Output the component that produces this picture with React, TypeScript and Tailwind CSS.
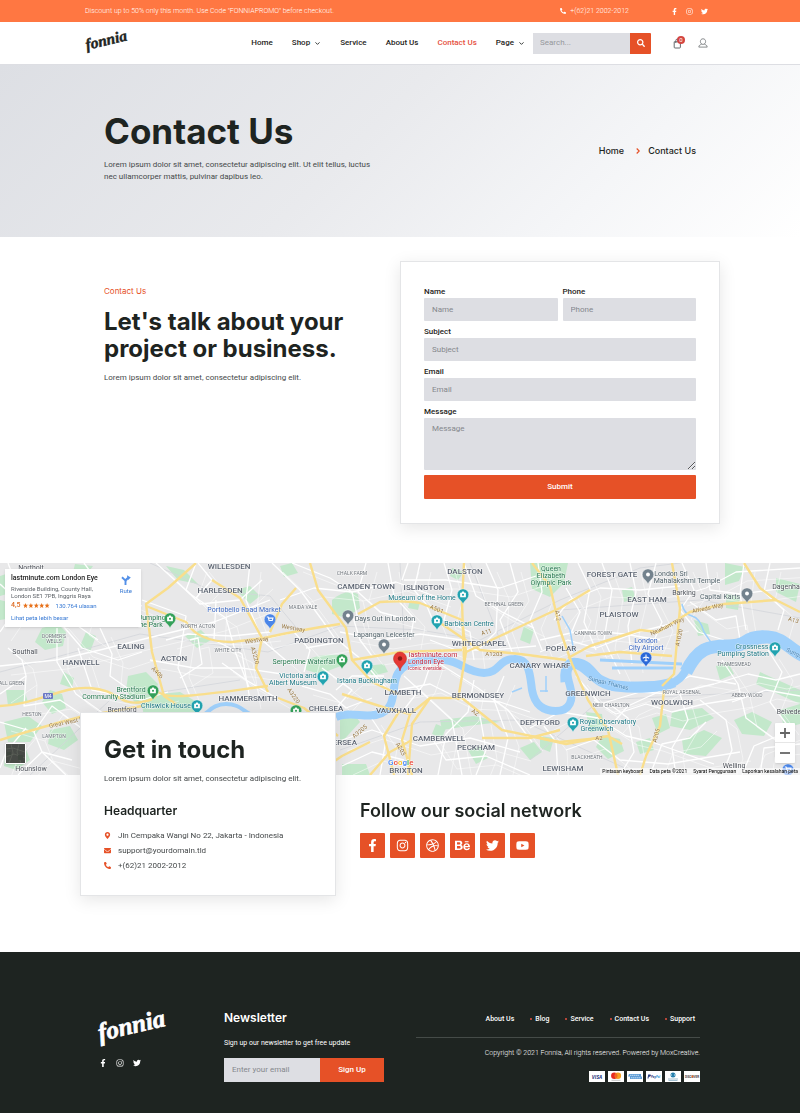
import type { ReactNode } from "react";
import {
  FaBehance,
  FaDribbble,
  FaEnvelope,
  FaFacebookF,
  FaInstagram,
  FaMapMarkerAlt,
  FaPhoneAlt,
  FaSearch,
  FaTwitter,
  FaYoutube,
} from "react-icons/fa";
import { FiChevronDown } from "react-icons/fi";

const field =
  "block w-full rounded-[1px] bg-[#dddee3] px-2 text-[8px] text-[#1e2421] placeholder:text-[#85888d] outline-none focus:ring-1 focus:ring-[#e65127]";

function Logo({ className }: { className: string }) {
  return (
    <svg viewBox="0 0 72 42" className={className} role="img" aria-label="fonnia">
      <text
        x="4"
        y="32"
        transform="rotate(-13 4 32)"
        fill="currentColor"
        stroke="currentColor"
        strokeWidth="0.7"
        strokeLinejoin="round"
        className="font-['Liberation_Serif',serif] text-[25px] font-bold italic"
      >
        fonnia
      </text>
    </svg>
  );
}

function SocialIcons({ className }: { className: string }) {
  return (
    <div className={className}>
      <a href="#facebook" aria-label="Facebook"><FaFacebookF /></a>
      <a href="#instagram" aria-label="Instagram"><FaInstagram /></a>
      <a href="#twitter" aria-label="Twitter"><FaTwitter /></a>
    </div>
  );
}

function TopBar() {
  return (
    <div className="bg-[#ff7742] text-[7px] font-light leading-[22px] text-white">
      <div className="mx-auto flex max-w-[640px] items-center pl-[5px] pr-3">
        <p className="mr-auto">Discount up to 50% only this month. Use Code "FONNIAPROMO" before checkout.</p>
        <p className="flex items-center gap-1">
          <FaPhoneAlt className="size-[6px]" /> +(62)21 2002-2012
        </p>
        <SocialIcons className="ml-[42px] flex items-center gap-2 text-[7px]" />
      </div>
    </div>
  );
}

function Header() {
  return (
    <header className="border-b border-[#dddee3] bg-white">
      <div className="mx-auto flex h-[42px] max-w-[640px] items-center pl-1 pr-3">
        <a href="#home" className="mr-auto text-[#1e2421]"><Logo className="h-[26px] w-[45px]" /></a>
        <nav className="flex items-center gap-[19px] text-[8px] font-medium text-[#1e2421]">
          <a href="#home">Home</a>
          <a href="#shop" className="flex items-center gap-1">Shop <FiChevronDown className="size-[7px]" strokeWidth={3} /></a>
          <a href="#service">Service</a>
          <a href="#about">About Us</a>
          <a href="#contact" className="text-[#e65141]">Contact Us</a>
          <a href="#page" className="flex items-center gap-1">Page <FiChevronDown className="size-[7px]" strokeWidth={3} /></a>
        </nav>
        <form className="ml-2 flex h-[21px]" onSubmit={(e) => e.preventDefault()}>
          <input
            aria-label="Search"
            type="search"
            placeholder="Search..."
            className="w-[97px] bg-[#dddee3] px-[7px] text-[8px] outline-none placeholder:text-[#96989c]"
          />
          <button aria-label="Search" className="grid w-[21px] place-items-center rounded-r-[1px] bg-[#e65127] text-white">
            <FaSearch className="size-[8px]" />
          </button>
        </form>
        <button aria-label="Cart" className="relative ml-[22px] text-[#55595c]">
          <svg viewBox="0 0 9 11" className="h-[11px] w-[9px]" fill="none" stroke="currentColor" strokeWidth="0.9">
            <path d="M1.2 3.8h6.2v5.4a.8.8 0 0 1-.8.8H2a.8.8 0 0 1-.8-.8zM2.8 5V2.6a1.5 1.5 0 0 1 3 0V5" />
          </svg>
          <span className="absolute -right-[3px] -top-[2px] grid size-[8px] place-items-center rounded-full bg-[#d44540] text-[6px] leading-none text-white">0</span>
        </button>
        <a href="#account" aria-label="Account" className="ml-4 text-[#66696c]">
          <svg viewBox="0 0 10 10" className="size-[10px]" fill="none" stroke="currentColor" strokeWidth="0.75">
            <path d="M5 .8c1.7 0 2.6 1.2 2.6 2.7C7.6 5.300 6.400 6.400 5 6.400S2.400 5.300 2.400 3.500C2.400 2 3.300.8 5 .8zM3.600 6.200C2.600 6.700.9 7 .8 9.100h8.400C9.100 7 7.400 6.700 6.400 6.200" />
          </svg>
        </a>
      </div>
    </header>
  );
}

function Hero() {
  return (
    <section className="bg-[linear-gradient(135deg,#dddfe4_0%,#e9eaed_45%,#f5f6f8_75%,#ffffff_100%)]">
      <div className="mx-auto flex h-[172px] max-w-[640px] items-center justify-between px-6">
        <div className="max-w-[272px] pb-3">
          <h1 className="text-[35px] font-bold leading-[48px] text-[#1e2421] font-[Inter,sans-serif]">Contact Us</h1>
          <p className="mt-1 text-[8px] leading-3 text-[#45494a]">
            Lorem ipsum dolor sit amet, consectetur adipiscing elit. Ut elit tellus, luctus nec ullamcorper mattis, pulvinar dapibus leo.
          </p>
        </div>
        <nav aria-label="Breadcrumb" className="flex items-center text-[9px] font-medium text-[#1e2421] font-[Inter,sans-serif]">
          <a href="#home">Home</a>
          <svg viewBox="0 0 4 6" className="ml-3 mr-2 h-[6px] w-[4px]" fill="none" stroke="#e65127" strokeWidth="1.2">
            <path d="M.7.5 3.200 3 .7 5.500" />
          </svg>
          <span>Contact Us</span>
        </nav>
      </div>
    </section>
  );
}

function Labelled({ id, label, children }: { id: string; label: string; children: ReactNode }) {
  return (
    <div className="flex-1">
      <label htmlFor={id} className="block text-[8px] font-medium leading-3 text-[#1e2421]">{label}</label>
      {children}
    </div>
  );
}

function ContactSection() {
  return (
    <section className="mx-auto flex max-w-[640px] items-start gap-6 py-6">
      <div className="flex-1 pl-6 pt-6">
        <p className="text-[8px] leading-3 text-[#e65127] font-[Inter,sans-serif]">Contact Us</p>
        <h2 className="mt-[11px] max-w-[260px] text-[24px] font-bold leading-[27px] text-[#1e2421] font-[Inter,sans-serif]">
          Let's talk about your project or business.
        </h2>
        <p className="mt-[10px] text-[8px] leading-3 text-[#45494a]">Lorem ipsum dolor sit amet, consectetur adipiscing elit.</p>
      </div>
      <form
        onSubmit={(e) => e.preventDefault()}
        className="mb-[15px] flex w-1/2 flex-col gap-[5px] border border-[#e4e5e7] bg-white px-[23px] py-6 shadow-[0_4px_16px_rgba(0,0,0,0.10)]"
      >
        <div className="flex gap-[5px]">
          <Labelled id="name" label="Name"><input id="name" placeholder="Name" className={`${field} h-[23px]`} /></Labelled>
          <Labelled id="phone" label="Phone"><input id="phone" type="tel" placeholder="Phone" className={`${field} h-[23px]`} /></Labelled>
        </div>
        <Labelled id="subject" label="Subject"><input id="subject" placeholder="Subject" className={`${field} h-[23px]`} /></Labelled>
        <Labelled id="email" label="Email"><input id="email" type="email" placeholder="Email" className={`${field} h-[23px]`} /></Labelled>
        <Labelled id="message" label="Message"><textarea id="message" placeholder="Message" className={`${field} h-[52px] resize-y py-[5px]`} /></Labelled>
        <button className="h-6 rounded-[1px] bg-[#e65127] text-[8px] font-medium text-white">Submit</button>
      </form>
    </section>
  );
}

/* ---------- Map ---------- */

const parks = [
  "M42 628l16-4 8 8-3 14-18 4-10-8z", "M128 676l18-4 12 12-6 18-16 2-10-14z", "M64 672l10 6-2 10-12-4z",
  "M50 690l12 4 4 14-14 6-10-12z", "M332 600q14-12 26-6l2 14-14 10-14-4z", "M306 660q18-8 38-4l2 8-26 10-14-4z",
  "M366 666l18-2 4 8-16 4z", "M530 563l38 0-4 20-14 14-18-8z", "M500 722l-26-6-34 4 2 10 26-4z",
  "M236 590l14-4 10 10-10 8z", "M185 636l16-6 10 10-14 8z", "M0 576l12-4 2 20-14 4z", "M75 564l18 2-6 8-14-2z",
  "M140 696l40-4 20 12 0 10-56 2z", "M4 722l24-6 14 10-12 16-22 0z", "M50 730l20-4 8 14-14 10-16-6z",
  "M0 600l16 4-4 14-12 2z", "M6 690l18 0 4 12-20 4z", "M586 712l16 2 2 16-14 2z", "M602 735l18 4 4 12-16 8-12-12z",
  "M672 712l30-4 12 10-24 12-20-4z", "M682 740l22-10 18 8-16 18-22-2z", "M734 720l18-8 20 10-8 14-22-2z",
  "M760 672l40 18 0 14-44-20z", "M725 563l20 4-6 14-14 4z", "M776 578l24 6-4 18-20-10z", "M716 666l12-4 6 12-14 6z",
  "M468 750l12-4 8 12-12 6z", "M340 720l14-6 6 8-20 22z", "M342 764l24 0 4 11-28 0z", "M436 724l10 4-4 10-10-4z",
  "M622 590l10-3 4 12-12 3z", "M694 620l14 4 2 10-12 2z", "M524 626l10 4-4 14-10-4z", "M452 568l12 4-6 8-8-4z",
  "M166 566l18 4 14 14-20-4z", "M280 566l12-3 6 10-14 4z", "M104 600l16 4-6 14-14-4z", "M86 632l10 4-6 16-10-6z",
  "M726 594l14 2-2 14-12-2z", "M636 742l14-4 4 12-14 4z", "M520 748l14-6 8 10-12 8z", "M652 718l14-4 4 14-12 6z",
  "M540 736l14 2-4 14-10-4z", "M6 748l18-4 6 16-14 10-12-4z", "M780 710l20-6 0 20-16 4z", "M410 600l10 2-2 8-10-2z",
];

const minorRoads = [
  "M0 584L28 610L58 620L82 648L118 660L142 652", "M8 563L22 600L0 632", "M57 628L57 662L76 694L110 718",
  "M0 666L56 660L100 650L148 638L214 622L270 600", "M78 648L92 690L142 700L168 692", "M0 694L26 676L22 660L8 648",
  "M26 676L24 706L60 700L84 716", "M100 628L112 654L110 676L130 690", "M142 600L186 616L178 668L190 696",
  "M150 660L194 668L242 668L282 674", "M166 640L188 634L232 636L270 632", "M216 600L214 640L242 654L250 700",
  "M156 563L190 594L226 618L236 654L250 690", "M196 563L186 590L200 604L240 600L262 580", "M250 563L246 600L262 640L290 664",
  "M272 563L300 590L322 620L336 640", "M280 600L314 588L352 592L396 582L440 598", "M292 563L330 578L352 592L358 620",
  "M366 563L358 592L380 612L416 622", "M388 563L394 596L414 618L410 640", "M420 563L414 590L426 604L436 628",
  "M444 563L452 590L444 620L470 632L474 660", "M464 563L476 596L502 612L534 628", "M486 563L498 590L496 632L478 650",
  "M510 563L518 592L500 620L512 652", "M404 580L446 580L500 588L536 576", "M340 632L382 640L420 634L462 640",
  "M352 614L360 640L372 656L398 652", "M306 648L340 642L362 660L386 688", "M302 686L330 694L346 708L372 698",
  "M322 668L352 690L338 706", "M336 690L352 676L384 676", "M398 690L430 684L462 700L500 702L530 712",
  "M404 676L428 698L452 720L462 775", "M432 660L424 684L402 712", "M440 664L478 688L508 710L532 742",
  "M474 680L468 712L446 734L438 775", "M504 676L494 700L508 738L500 775", "M370 716L386 740L380 775",
  "M336 742L372 730L420 746L470 738L520 752", "M342 766L372 752L404 760", "M430 735L446 760L486 756L530 775",
  "M480 716L486 750L476 775", "M544 726L556 742L558 775", "M530 728L560 712L598 718L626 736L652 742L714 764",
  "M540 652L568 640L596 648L638 632L678 622", "M540 640L584 630L624 634L660 640", "M554 620L570 600L600 588L640 590L680 586",
  "M578 563L590 588L584 622L596 650", "M602 563L612 590L604 640L620 674", "M630 563L636 592L628 626L632 664",
  "M656 563L648 594L662 622L650 650", "M566 588L580 612L570 636", "M576 676L600 704L640 692L672 694L714 684",
  "M594 700L616 714L646 704L672 712L704 704L742 698", "M612 724L628 706L654 694L690 676L736 684",
  "M620 775L634 752L628 718L612 706", "M650 775L662 744L690 738L706 722", "M700 700L726 720L732 750L722 775",
  "M722 660L738 684L746 718L776 740", "M714 684L748 674L776 680L800 674", "M732 702L766 690L800 696",
  "M742 775L754 746L792 730", "M760 775L764 748L800 744", "M682 563L694 590L680 610L698 632L724 640",
  "M706 563L710 590L740 594L800 586", "M744 563L740 594L746 630", "M770 563L764 592L784 610L778 630",
  "M676 597L706 588L736 572L800 568", "M690 602L716 620L736 616L740 640", "M768 650L782 672L770 702L788 726",
  "M0 722L34 732L42 752L72 760", "M34 732L52 706L84 730", "M42 752L18 775", "M42 752L66 775", "M26 728L6 752L0 768",
  "M84 563L104 590L142 606", "M86 600L78 626L98 640", "M180 678L202 664L198 638L190 640", "M198 563L212 580L196 598",
  "M222 663L246 680L280 700", "M260 640L294 632L310 650L304 672", "M408 563L402 580", "M430 640L456 650L492 650L536 646",
  "M566 750L594 740L620 760L668 764L740 752", "M680 694L688 720L672 748L676 775", "M538 563L542 592L530 620L542 650",
];

const mainRoads = [
  "M0 706C40 704 60 686 90 688S118 706 142 702S150 688 162 694S220 692 268 686",
  "M0 740C26 732 52 724 80 717L142 706", "M196 563L168 588L146 604L152 652L164 696L176 704",
  "M146 606L186 622Q198 642 232 642L264 638Q300 630 340 624", "M212 580L240 598L262 638L256 668L268 692",
  "M310 563L318 590L346 628L352 660L372 682L398 694", "M358 614L380 602Q404 600 420 603L462 620L466 652L458 700",
  "M464 563L462 602L464 660", "M436 620L480 650L520 654L566 660", "M466 652L500 636L560 608L590 590",
  "M352 660L400 652L462 650", "M342 694L386 708L410 714L430 698L462 698L502 730L560 742L600 738",
  "M410 714L402 740L412 775", "M400 710L384 736L394 775", "M430 698L412 724L408 775", "M370 775L390 752L412 740",
  "M532 563L550 586L560 630L572 664L588 700L608 730L618 775", "M568 658L590 646L640 630L658 632L690 612L724 604L776 600L800 612",
  "M672 563L680 608L674 674L662 686", "M664 690L660 726L646 756L640 775", "M530 736L566 744L608 736L622 744",
  "M482 738L530 738L560 730", "M776 600L760 588L744 563", "M270 632L282 604L296 588",
  "M314 775L342 756L370 742", "M278 698L304 708L338 736", "M586 656L620 652L672 656",
];

type Label = [x: number, y: number, text: string, kind: string];

const kinds: Record<string, string> = {
  area: "text-[8px] font-medium fill-[#5d6572]",
  town: "text-[7px] fill-[#4c5058]",
  small: "text-[5px] fill-[#6d737a]",
  green: "text-[7px] fill-[#23764c]",
  teal: "text-[7px] fill-[#1d7784]",
  gray: "text-[7px] fill-[#4f6068]",
  blue: "text-[7px] fill-[#3a66c0]",
  red: "text-[7px] fill-[#c02238]",
};

const labels: Label[] = [
  [229, 569, "WILLESDEN", "area"], [220, 593, "HARLESDEN", "area"], [131, 649, "EALING", "area"],
  [174, 661, "ACTON", "area"], [81, 665, "HANWELL", "area"], [248, 701, "HAMMERSMITH", "area"],
  [366, 589, "CAMDEN TOWN", "area"], [424, 590, "ISLINGTON", "area"], [465, 574, "DALSTON", "area"],
  [319, 643, "PADDINGTON", "area"], [479, 646, "WHITECHAPEL", "area"], [403, 695, "LAMBETH", "area"],
  [478, 698, "BERMONDSEY", "area"], [396, 713, "VAUXHALL", "area"], [326, 711, "CHELSEA", "area"],
  [335, 745, "BATTERSEA", "area"], [439, 741, "CAMBERWELL", "area"], [476, 750, "PECKHAM", "area"],
  [406, 773, "BRIXTON", "area"], [612, 577, "FOREST GATE", "area"], [647, 602, "EAST HAM", "area"],
  [619, 617, "PLAISTOW", "area"], [561, 651, "POPLAR", "area"], [540, 668, "CANARY WHARF", "area"],
  [588, 696, "GREENWICH", "area"], [672, 705, "WOOLWICH", "area"], [540, 725, "DEPTFORD", "area"],
  [563, 771, "LEWISHAM", "area"],
  [31, 570, "Northolt", "town"], [25, 654, "Southall", "town"], [31, 771, "Hounslow", "town"],
  [122, 712, "Brentford", "town"], [684, 595, "Barking", "town"], [789, 589, "Dagenham", "town"],
  [792, 714, "Belvedere", "town"], [734, 768, "Welling", "town"],
  [54, 638, "DORMER'S", "small"], [54, 643, "WELLS", "small"], [10, 685, "HALL GREEN", "small"],
  [32, 716, "HESTON", "small"], [54, 738, "LAMPTON", "small"], [198, 628, "NORTH ACTON", "small"],
  [228, 652, "WHITE CITY", "small"], [303, 609, "MAIDA VALE", "small"], [352, 575, "CHALK FARM", "small"],
  [504, 606, "BETHNAL GREEN", "small"], [593, 635, "CANNING TOWN", "small"], [682, 694, "ROYAL ARSENAL", "small"],
  [747, 697, "ABBEY WOOD", "small"], [734, 666, "THAMESMEAD", "small"], [611, 707, "NEW CHARLTON", "small"],
  [587, 759, "BLACKHEATH", "small"],
  [152, 620, "Jumping", "green"], [150, 627, "the Park", "green"], [131, 692, "Brentford", "green"],
  [114, 699, "Community Stadium", "green"], [304, 664, "Serpentine Waterfall", "green"],
  [551, 571, "Queen", "green"], [551, 578, "Elizabeth", "green"], [551, 585, "Olympic Park", "green"],
  [166, 708, "Chiswick House", "teal"], [298, 678, "Victoria and", "teal"], [293, 685, "Albert Museum", "teal"],
  [367, 683, "Istana Buckingham", "teal"], [422, 600, "Museum of the Home", "teal"],
  [469, 626, "Barbican Centre", "teal"], [752, 649, "Crossness", "teal"], [743, 656, "Pumping Station", "teal"],
  [608, 724, "Royal Observatory", "teal"], [597, 731, "Greenwich", "teal"],
  [385, 621, "Days Out in London", "gray"], [384, 637, "Lapangan Leicester", "gray"],
  [671, 576, "London Sri", "gray"], [687, 583, "Mahalakshmi Temple", "gray"], [720, 599, "Capital Karts", "gray"],
  [244, 612, "Portobello Road Market", "blue"], [646, 643, "London", "blue"], [646, 650, "City Airport", "blue"],
  [433, 657, "lastminute.com", "red"], [426, 664, "London Eye", "red"],
];

const pins: [number, number, string][] = [
  [170, 620, "#35a15a"], [153, 692, "#35a15a"], [342, 661, "#35a15a"], [296, 712, "#35a15a"],
  [197, 707, "#22a3b0"], [323, 678, "#22a3b0"], [367, 667, "#22a3b0"], [463, 596, "#22a3b0"],
  [437, 622, "#22a3b0"], [573, 724, "#22a3b0"], [775, 649, "#22a3b0"], [348, 617, "#73828d"],
  [384, 646, "#73828d"], [648, 576, "#73828d"], [747, 595, "#73828d"], [270, 621, "#4b86e8"],
  [646, 659, "#2a68d8"], [788, 771, "#4b86e8"],
];

const roadNames: [number, number, number, string, string][] = [
  [156, 674, 45, "A406", "#94743f"], [68, 724, -12, "Great West Rd", "#94743f"], [257, 642, -8, "Westway", "#94743f"],
  [293, 630, 10, "Westway", "#94743f"], [253, 656, 75, "A3220", "#94743f"], [292, 697, 55, "A3220", "#94743f"],
  [436, 611, 22, "A501", "#94743f"], [487, 634, -16, "A11", "#94743f"], [494, 656, 0, "A1203", "#94743f"],
  [474, 714, 32, "A2", "#94743f"], [361, 733, -40, "A3205", "#94743f"], [399, 750, 60, "A203", "#94743f"],
  [556, 616, 80, "A12", "#94743f"], [668, 628, -25, "Newham Way", "#94743f"], [708, 610, -12, "Alfreds Way", "#94743f"],
  [681, 638, -78, "A1020", "#94743f"], [658, 736, -75, "A205", "#94743f"], [599, 740, 0, "A2", "#94743f"],
  [793, 622, 15, "A13", "#94743f"], [608, 685, 14, "Sungai Thames", "#4381b3"], [794, 655, 25, "Sungai", "#4381b3"],
];

const thames =
  "M336 717C352 710 366 720 382 713C396 706 392 690 396 678C400 662 424 658 445 660C462 662 466 672 484 673C500 673 498 659 514 659C530 658 530 676 532 690C535 706 544 711 556 711C570 711 574 700 570 686C566 672 564 662 577 662C592 664 594 678 606 684C622 688 642 685 662 685C686 684 686 664 698 652C710 640 728 648 742 641C754 632 774 632 784 642L804 654";

function StreetMap() {
  return (
    <svg
      viewBox="0 563 800 212"
      preserveAspectRatio="xMidYMid slice"
      className="block h-[212px] w-full bg-[#e8e8e9] font-[Roboto,sans-serif]"
      role="img"
      aria-label="Map of London"
    >
      <g fill="#c3e8cb">{parks.map((d) => <path key={d} d={d} />)}</g>
      <g fill="none" stroke="#d3d6db" strokeWidth="0.8">
        <path d="M0 672L60 656L140 634L268 652L340 626L420 630L480 640L560 600L640 568L680 563" />
        <path d="M150 563L210 590L270 596L300 632M400 563L404 640M530 760L600 700L800 690M560 610L700 600L800 618M340 750L420 722L520 720L640 775M30 775L110 700L240 680M470 563L500 640" />
      </g>
      <g fill="none" stroke="#fff" strokeWidth="1.3" strokeLinejoin="round">
        {minorRoads.map((d) => <path key={d} d={d} />)}
      </g>
      <g fill="none" stroke="#fff" strokeWidth="0.6" opacity="0.85">
        {minorRoads.map((d) => <path key={d} d={d} transform="translate(11 9)" />)}
      </g>
      <g fill="none" stroke="#9fd0fb">
        <path d={thames} strokeWidth="8" strokeLinejoin="round" />
        <path d="M686 672C698 648 708 646 728 646S752 636 768 637S790 650 804 656" strokeWidth="13" />
        <path d="M566 682C564 664 572 660 582 666S598 684 616 686S660 688 674 682" strokeWidth="11" />
        <path d="M196 718C208 716 210 704 226 704S244 714 256 716" strokeWidth="4" />
        <path d="M600 660L682 664M612 668L676 668" strokeWidth="3" />
        <path d="M546 676v16M540 691h8M512 692l10-4M682 604q2 10 10 12t12 16l8 12M562 616l8 14 4 22" strokeWidth="1.5" />
      </g>
      <g fill="none" stroke="#f9de8c" strokeWidth="2.4" strokeLinejoin="round">
        {mainRoads.map((d) => <path key={d} d={d} />)}
      </g>
      <rect x="43" y="693" width="10" height="6" rx="1" fill="#6a78c4" />
      <text x="48" y="698" textAnchor="middle" className="fill-white text-[5px]">M4</text>
      {roadNames.map(([x, y, r, t, color]) => (
        <text key={`${t}${x}`} x={x} y={y} transform={`rotate(${r} ${x} ${y})`} textAnchor="middle" fill={color} stroke="#fff" strokeWidth="0.6" strokeOpacity="0.5" paintOrder="stroke" className="text-[6px]">{t}</text>
      ))}
      {labels.map(([x, y, t, kind]) => (
        <text key={`${t}${x}`} x={x} y={y} textAnchor="middle" stroke="#fff" strokeWidth="1" strokeOpacity="0.7" paintOrder="stroke" className={kinds[kind]}>{t}</text>
      ))}
      <text x="408" y="670" stroke="#fff" strokeWidth="1" strokeOpacity="0.7" paintOrder="stroke" className="fill-[#c02238] text-[5px]">Iconic riverside...</text>
      {pins.map(([x, y, color]) => (
        <g key={`${x}-${y}`} transform={`translate(${x} ${y}) scale(1.15)`}>
          <path d="M0 7C-.8 4.800-2 4-3.600 2.300A5 5 0 1 1 3.600 2.300C2 4 .8 4.800 0 7z" fill={color} stroke="#fff" strokeWidth="0.3" />
          {color === "#73828d" ? <circle cy="-1.300" r="1.700" fill="#fff" /> : color === "#2a68d8" ? (
            <path d="M0-4V1.700M-2.800-.6 0-2 2.800-.6M-1.300 1.500h2.600" stroke="#fff" strokeWidth="0.9" fill="none" />
          ) : color === "#4b86e8" ? (
            <path d="M-2.800-3.500h1.200l.8 3h2.800l.6-2h-3.700" stroke="#fff" strokeWidth="0.9" fill="none" />
          ) : (
            <path d="M-2.500-2.800h1.200l.7-1.200h1.200l.7 1.200h1.200v3.800h-5zM-.9-1a.9.900 0 1 0 1.800 0a.9.900 0 1 0-1.800 0" fill="#fff" fillRule="evenodd" />
          )}
        </g>
      ))}
      <path d="M400 671C399 665 393.500 664 393.500 658.500A6.500 6.500 0 0 1 406.500 658.500C406.500 664 401 665 400 671z" fill="#e53935" stroke="#b9261f" strokeWidth="0.500" />
      <circle cx="400" cy="658.500" r="2.200" fill="#8c1712" />
      <text x="388" y="765" stroke="#fff" strokeWidth="1" paintOrder="stroke" className="text-[8px] font-medium">
        <tspan fill="#4285f4">G</tspan><tspan fill="#ea4335">o</tspan><tspan fill="#fbbc05">o</tspan><tspan fill="#4285f4">g</tspan><tspan fill="#34a853">l</tspan><tspan fill="#ea4335">e</tspan>
      </text>
    </svg>
  );
}

function MapSection() {
  return (
    <section className="relative" aria-label="Location">
      <StreetMap />
      <div className="absolute left-[5px] top-[6px] flex h-[58px] w-[136px] justify-between bg-white px-[6px] py-1 text-[6px] leading-[7px] text-[#5e6368] shadow-sm">
        <div>
          <p className="text-[7px] font-medium leading-[10px] text-[#222]">lastminute.com London Eye</p>
          <p className="mt-[2px]">Riverside Building, County Hall,<br />London SE1 7PB, Inggris Raya</p>
          <p className="mt-[2px] flex items-center gap-[2px] leading-[9px]">
            <span className="text-[7px] font-medium text-[#dd681e]">4,5</span>
            <svg viewBox="0 0 27 5" className="h-[5px] w-[27px]" fill="#e7711b" aria-hidden="true">
              {[0, 1, 2, 3, 4].map((i) => (
                <path key={i} transform={`translate(${i * 5.4} 0)`} d="M2.500 0 3.200 1.700 5 1.800 3.600 3 4.100 4.900 2.500 3.900.9 4.900 1.400 3 0 1.800 1.800 1.700z" />
              ))}
            </svg>
            <a href="#reviews" className="ml-1 text-[#3779d4]">130.764 ulasan</a>
          </p>
          <a href="#larger-map" className="block pt-[3px] leading-[9px] text-[#3779d4]">Lihat peta lebih besar</a>
        </div>
        <a href="#route" className="flex flex-col items-center pr-[3px] pt-[2px] text-[#3779d4]">
          <svg viewBox="0 0 10 10" className="size-[10px]" fill="none" stroke="#5390e8" strokeWidth="1.900">
            <path d="M4.500 10V5.600L1 2.200M4.500 6.800C4.600 4.400 5.400 3.600 7.500 2.800" />
            <path d="M6 .2 9.800 2.600 6.600 5.400z" fill="#5390e8" stroke="none" />
          </svg>
          <span className="mt-[2px]">Rute</span>
        </a>
      </div>
      <button aria-label="Satellite view" className="absolute bottom-[11px] left-[5px] size-[21px] rounded-[1px] border border-white bg-[#474a46] shadow-sm">
        <svg viewBox="0 0 19 19" className="size-full" fill="none" stroke="#5d6259" strokeWidth="0.800">
          <path d="M0 5 7 4 19 8M5 0l2 9-4 10M13 0l-2 8 4 11M0 13l8-3 11 4" />
          <path d="M1 8h4v3H1zM12 11h5v5h-5z" fill="#3f463f" stroke="none" />
        </svg>
      </button>
      <div className="absolute bottom-3 right-[5px] flex w-5 flex-col divide-y divide-[#e6e6e6] rounded-[1px] bg-white text-[#666] shadow">
        <button aria-label="Zoom in" className="grid h-5 place-items-center">
          <svg viewBox="0 0 10 10" className="size-[10px]" stroke="currentColor" strokeWidth="1.800"><path d="M5 0v10M0 5h10" /></svg>
        </button>
        <button aria-label="Zoom out" className="grid h-5 place-items-center">
          <svg viewBox="0 0 10 10" className="size-[10px]" stroke="currentColor" strokeWidth="1.800"><path d="M0 5h10" /></svg>
        </button>
      </div>
      <div className="absolute bottom-0 right-0 flex gap-[6px] bg-white/60 px-[2px] text-[5px] leading-[7px] text-black">
        <span>Pintasan keyboard</span><span>Data peta ©2021</span><span>Syarat Penggunaan</span><span>Laporkan kesalahan peta</span>
      </div>
    </section>
  );
}

const socials = [
  { name: "Facebook", Icon: FaFacebookF },
  { name: "Instagram", Icon: FaInstagram },
  { name: "Dribbble", Icon: FaDribbble },
  { name: "Behance", Icon: FaBehance },
  { name: "Twitter", Icon: FaTwitter },
  { name: "YouTube", Icon: FaYoutube },
];

function GetInTouch() {
  return (
    <section className="relative mx-auto -mt-[63px] flex max-w-[640px] items-end pb-14">
      <div className="w-2/5 border border-[#e4e5e7] bg-white px-[23px] py-[22px] shadow-[0_4px_16px_rgba(0,0,0,0.10)]">
        <h2 className="text-[24px] font-bold leading-[30px] text-[#1e2421] font-[Inter,sans-serif]">Get in touch</h2>
        <p className="mt-2 text-[8px] leading-3 text-[#45494a]">Lorem ipsum dolor sit amet, consectetur adipiscing elit.</p>
        <h3 className="mt-[18px] text-[12px] font-semibold leading-4 text-[#1e2421] font-[Inter,sans-serif]">Headquarter</h3>
        <ul className="mt-[9px] text-[8px] leading-[15px] text-[#45494a]">
          <li className="flex items-center"><FaMapMarkerAlt className="mr-[7px] size-[7px] text-[#e65127]" />Jln Cempaka Wangi No 22, Jakarta - Indonesia</li>
          <li className="flex items-center"><FaEnvelope className="mr-[7px] size-[7px] text-[#e65127]" />support@yourdomain.tld</li>
          <li className="flex items-center"><FaPhoneAlt className="mr-[7px] size-[7px] text-[#e65127]" />+(62)21 2002-2012</li>
        </ul>
      </div>
      <div className="pb-[38px] pl-6">
        <h2 className="text-[18px] font-semibold leading-6 text-[#1e2421] font-[Inter,sans-serif]">Follow our social network</h2>
        <div className="mt-[10px] flex gap-[5px]">
          {socials.map(({ name, Icon }) => (
            <a key={name} href={`#${name}`} aria-label={name} className="grid size-[25px] place-items-center rounded-[1px] bg-[#e65127] text-white">
              <Icon className={name === "Behance" ? "size-[15px]" : "size-[13px]"} />
            </a>
          ))}
        </div>
      </div>
    </section>
  );
}

function PaymentCards() {
  const card = "h-[11px] w-4 bg-white";
  return (
    <div className="mt-3 flex justify-end gap-[3px]">
      <svg viewBox="0 0 16 11" className={card} role="img" aria-label="Visa">
        <text x="8" y="7.500" textAnchor="middle" fill="#25367d" className="font-['Open_Sans',sans-serif] text-[5px] font-bold italic">VISA</text>
      </svg>
      <svg viewBox="0 0 16 11" className={card} role="img" aria-label="Mastercard">
        <circle cx="6.300" cy="4.800" r="3.200" fill="#e52a20" /><circle cx="9.900" cy="4.800" r="3.200" fill="#f5a01f" />
        <path d="M8.100 2.100a3.200 3.200 0 0 1 0 5.400a3.200 3.200 0 0 1 0-5.400z" fill="#f2661f" /><path d="M3.500 9.300h9" stroke="#aaa" strokeWidth="0.700" />
      </svg>
      <svg viewBox="0 0 16 11" className={card} role="img" aria-label="American Express">
        <path d="M2 3h12v2.500h1V8H3V5.500H1z" fill="#5d9cd6" /><path d="M3 4.300h9M4 6.800h10" stroke="#dcecf8" strokeWidth="0.800" strokeDasharray="1.500 .5" />
      </svg>
      <svg viewBox="0 0 16 11" className={card} role="img" aria-label="PayPal">
        <path d="M2.200 3.500h1.800c1.400 0 1.200 2.200-.4 2.200h-.8l-.3 1.800H1.500z" fill="#263b80" />
        <text x="5" y="7" className="text-[3px] font-bold italic"><tspan fill="#263b80">Pay</tspan><tspan fill="#2b98d5">Pal</tspan></text>
      </svg>
      <svg viewBox="0 0 16 11" className={card} role="img" aria-label="Diners Club">
        <circle cx="8" cy="4" r="2.500" fill="#2680ad" /><path d="M7 2.700a1.800 1.800 0 0 0 0 2.600zM9 2.700a1.800 1.800 0 0 1 0 2.600z" fill="#fff" />
        <path d="M3 8h10M3.500 9.500h9" stroke="#7ba5bb" strokeWidth="0.700" />
      </svg>
      <svg viewBox="0 0 16 11" className={card} role="img" aria-label="Discover">
        <text x="8" y="6.500" textAnchor="middle" fill="#4b4040" className="text-[3px] font-bold">DISCOVER</text>
        <circle cx="8.500" cy="5.500" r="1" fill="#ee6c2c" />
      </svg>
    </div>
  );
}

function Footer() {
  return (
    <footer className="bg-[#1e2421] text-white">
      <div className="mx-auto flex max-w-[640px] pb-[31px] pl-4 pr-5 pt-[57px]">
        <div className="w-32">
          <Logo className="h-[42px] w-[72px]" />
          <SocialIcons className="mt-2 flex gap-[9px] pl-[3px] text-[8px]" />
        </div>
        <div className="w-40">
          <h2 className="text-[12px] font-semibold leading-[18px] font-[Inter,sans-serif]">Newsletter</h2>
          <p className="mt-[10px] text-[7px] leading-3">Sign up our newsletter to get free update</p>
          <form className="mt-[9px] flex h-6" onSubmit={(e) => e.preventDefault()}>
            <input type="email" aria-label="Email" placeholder="Enter your email" className="w-24 bg-[#dddee3] px-2 text-[8px] text-[#1e2421] outline-none placeholder:text-[#85888d]" />
            <button className="flex-1 bg-[#e65127] text-[8px] font-medium">Sign Up</button>
          </form>
        </div>
        <div className="ml-8 flex-1">
          <nav className="flex justify-end gap-4 border-b border-[#454b48] pb-3 pr-[5px] pt-1 text-[7px] font-medium leading-3">
            <a href="#about">About Us</a>
            {["Blog", "Service", "Contact Us", "Support"].map((t) => (
              <a key={t} href={`#${t}`} className="flex items-center gap-[3px]">
                <span className="size-[2px] rounded-full bg-[#e65141]" />{t}
              </a>
            ))}
          </nav>
          <p className="mt-[9px] text-right text-[7px] font-light leading-3">Copyright © 2021 Fonnia, All rights reserved. Powered by MoxCreative.</p>
          <PaymentCards />
        </div>
      </div>
    </footer>
  );
}

export default function App() {
  return (
    <div className="min-h-screen bg-white font-[Roboto,sans-serif] text-[#1e2421]">
      <TopBar />
      <Header />
      <Hero />
      <ContactSection />
      <MapSection />
      <GetInTouch />
      <Footer />
    </div>
  );
}
